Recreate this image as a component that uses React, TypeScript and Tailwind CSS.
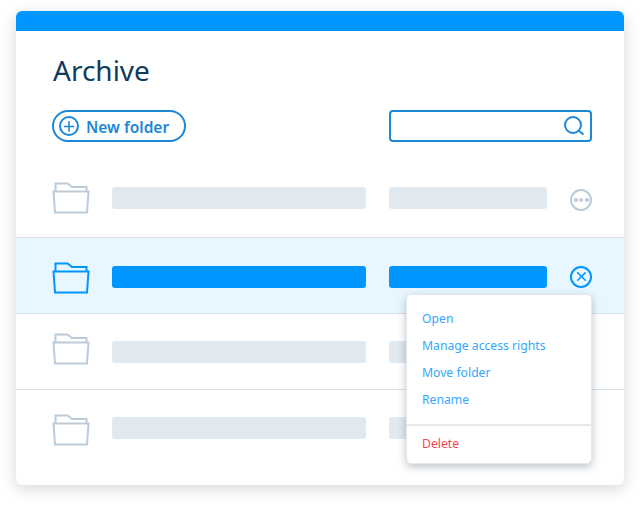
import { Plus, X } from "lucide-react";

function FolderIcon({ active }: { active?: boolean }) {
  const stroke = active ? "#0096ff" : "#bccbd9";
  return (
    <svg width="38" height="32" viewBox="0 0 38 32" fill="none" stroke={stroke} strokeWidth="2">
      <path d="M3.5 9V1.5H15.5L20 5H34.5V9" />
      <path d="M1.5 9.5H36.5L35 30.5H3Z" />
    </svg>
  );
}

function SearchIcon() {
  return (
    <svg width="22" height="20" viewBox="0 0 22 20" fill="none" stroke="#1b87d6" strokeWidth="2">
      <circle cx="10" cy="9" r="8" />
      <path d="M16 15L20.5 18.5" />
    </svg>
  );
}

function Row({ active, first, last, folderClass }: { active?: boolean; first?: boolean; last?: boolean; folderClass?: string }) {
  const bar = active ? "bg-[#0096ff]" : "bg-[#e0e8f0]";
  return (
    <div
      className={`flex items-center pl-[36px] pr-[32px] border-b ${last ? "border-transparent h-[96px] pb-[20px]" : "border-[#d8e0e8]"} ${first ? "h-[76px] pb-[4px]" : ""} ${active ? "h-[76px] pt-[2px] bg-[#e8f6ff]" : ""} ${!first && !last && !active ? "h-[76px]" : ""}`}
    >
      <div className={`w-[38px] mr-[22px] flex ${folderClass ?? ""}`}>
        <FolderIcon active={active} />
      </div>
      <div className={`h-[22px] w-[254px] rounded-[3px] ${bar}`} />
      <div className={`h-[22px] w-[158px] ml-[23px] rounded-[3px] ${bar}`} />
      <div className="ml-[23px]">
        {first && (
          <div className="mt-[5px] w-[22px] h-[22px] rounded-full border-2 border-[#bccbd9] flex items-center justify-center gap-[1.5px]">
            <span className="w-[4px] h-[4px] rounded-full bg-[#bccbd9]" />
            <span className="w-[4px] h-[4px] rounded-full bg-[#bccbd9]" />
            <span className="w-[4px] h-[4px] rounded-full bg-[#bccbd9]" />
          </div>
        )}
        {active && (
          <div className="w-[22px] h-[22px] rounded-full border-2 border-[#0096ff] flex items-center justify-center text-[#0096ff]">
            <X size={15} strokeWidth={2.6} />
          </div>
        )}
      </div>
    </div>
  );
}

const menuItems = ["Open", "Manage access rights", "Move folder", "Rename"];

export default function App() {
  return (
    <div className="w-[640px] h-[506px] bg-white overflow-hidden pt-[11px] pl-[16px] font-['Noto_Sans',sans-serif]">
      <div className="relative w-[608px] h-[474px] bg-white rounded-[6px] shadow-[0_4px_16px_rgba(40,60,80,0.2)]">
        <div className="h-[20px] bg-[#0096ff] rounded-t-[6px]" />
        <div className="pl-[36px] pr-[32px] pt-[19px]">
          <h1 className="text-[28px] leading-[40px] text-[#0f3c5c] pl-[1px]">Archive</h1>
          <div className="flex justify-between mt-[20px]">
            <button className="w-[134px] h-[32px] rounded-full border-2 border-[#1b87d6] flex items-center pl-[5px] text-[#1b87d6]">
              <span className="w-[20px] h-[20px] rounded-full border-2 border-[#1b87d6] flex items-center justify-center">
                <Plus size={17} strokeWidth={2.4} />
              </span>
              <span className="ml-[7px] text-[15.5px] font-semibold leading-none pt-[3px]">New folder</span>
            </button>
            <div className="w-[203px] h-[32px] rounded-[4px] border-2 border-[#1b87d6] flex items-center justify-end pr-[5px]">
              <SearchIcon />
            </div>
          </div>
        </div>
        <div className="mt-[20px]">
          <Row first />
          <Row active folderClass="mt-[2px]" />
          <Row folderClass="mb-[6px]" />
          <Row last folderClass="mt-[4px]" />
        </div>
        <div className="absolute left-[390px] top-[283px] w-[186px] h-[170px] bg-white rounded-[5px] border border-[#e4e8ec] shadow-[0_3px_8px_rgba(40,60,80,0.3)]">
          <div className="pl-[15px] pt-[10px] h-[129px]">
            {menuItems.map((t) => (
              <div key={t} className="h-[27.3px] flex items-center text-[12.2px] text-[#35a7fb]">
                {t}
              </div>
            ))}
          </div>
          <div className="border-t-2 border-[#e4e9ee] pl-[15px] pt-[4px] text-[12.2px] leading-[27px] text-[#f5484d]">
            Delete
          </div>
        </div>
      </div>
    </div>
  );
}
